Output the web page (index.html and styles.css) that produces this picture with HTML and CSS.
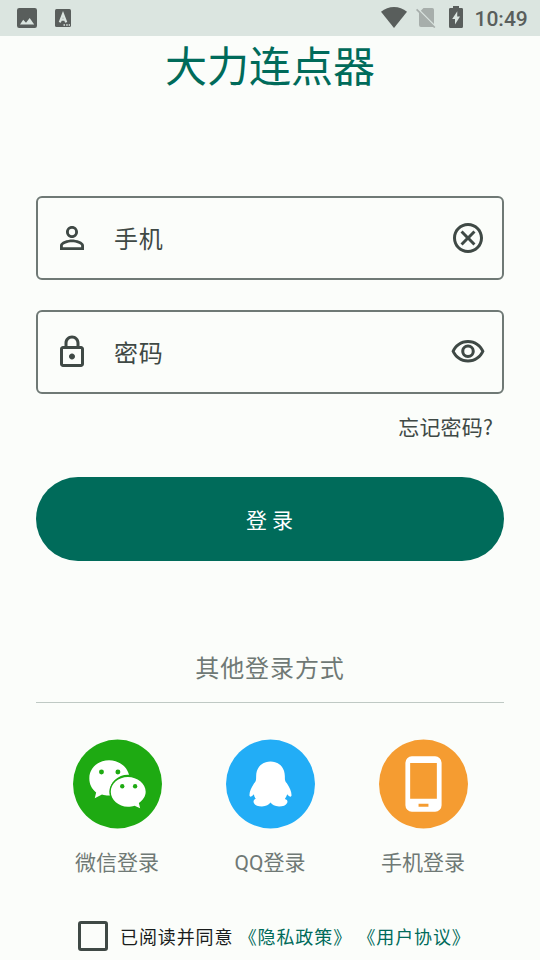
FILE: index.html
```html
<!DOCTYPE html>
<html lang="zh-CN">
<head>
<meta charset="utf-8">
<title>大力连点器</title>
<link rel="stylesheet" href="styles.css">
</head>
<body>
<header class="status">
  <svg class="s-image" viewBox="0 0 20 20"><path fill-rule="evenodd" d="M2.200 0h15.600a2.200 2.200 0 0 1 2.200 2.200v15.600a2.200 2.200 0 0 1-2.200 2.200H2.200A2.200 2.200 0 0 1 0 17.800V2.200A2.200 2.200 0 0 1 2.200 0ZM3 16.500h14.200L12.700 10 9 14.800 6.200 11.800Z"/></svg>
  <svg class="s-lang" viewBox="0 0 16 18"><rect width="16" height="18" rx="1.500"/><g class="cut"><path d="M4.800 13.300 8 5.200 11.200 13.300M6 10.600h4"/></g><path class="dots" d="M8.500 15.300h1.500v1.500H8.500zM11.200 15.300h1.500v1.500h-1.500zM13.700 15.300h1.300v1.500h-1.300z"/></svg>
  <span class="spacer"></span>
  <svg class="s-wifi" viewBox="0 0 26 21"><path d="M0 4.800Q5.800 0 13 0t13 4.800L13 21Z"/></svg>
  <svg class="s-sim" viewBox="0 0 20 20"><path d="M7.500 0h8.700Q18 0 18 1.800V16L4.800 2.700ZM3 3.500 18 18.500 17.100 19H5q-2 0-2-2Z"/><path class="slash" d="m.6 1.300 18.200 18.200"/></svg>
  <svg class="s-batt" viewBox="0 0 14 22"><path fill-rule="evenodd" d="M4 0h6v2h2.600Q14 2 14 3.300V20.500Q14 22 12.600 22H1.400Q0 22 0 20.500V3.300Q0 2 1.400 2H4ZM8.300 5.300 3.200 13H6v5.500L11 10.500H8.200Z"/></svg>
  <span class="clock">10:49</span>
</header>
<main class="page">
  <h1 class="title">大力连点器</h1>
  <div class="field">
    <svg viewBox="0 0 24 24"><path d="M12 5.900a2.100 2.100 0 1 1 0 4.200 2.100 2.100 0 0 1 0-4.200m0 9c2.970 0 6.100 1.460 6.100 2.100v1.100H5.900V17c0-.64 3.130-2.100 6.100-2.100M12 4C9.790 4 8 5.790 8 8s1.790 4 4 4 4-1.790 4-4-1.790-4-4-4zm0 9c-2.670 0-8 1.340-8 4v3h16v-3c0-2.660-5.330-4-8-4z"/></svg>
    <span class="label">手机</span>
    <svg viewBox="0 0 24 24"><path d="M12 2C6.470 2 2 6.470 2 12s4.470 10 10 10 10-4.470 10-10S17.530 2 12 2zm0 18c-4.410 0-8-3.590-8-8s3.590-8 8-8 8 3.590 8 8-3.590 8-8 8zm3.590-13L12 10.590 8.410 7 7 8.410 10.590 12 7 15.590 8.410 17 12 13.410 15.590 17 17 15.590 13.410 12 17 8.410z"/></svg>
  </div>
  <div class="field">
    <svg viewBox="0 0 24 24"><path d="M18 8h-1V6c0-2.760-2.240-5-5-5S7 3.240 7 6v2H6c-1.100 0-2 .9-2 2v10c0 1.100.9 2 2 2h12c1.100 0 2-.9 2-2V10c0-1.100-.9-2-2-2zM9 6c0-1.660 1.340-3 3-3s3 1.340 3 3v2H9V6zm9 14H6V10h12v10zm-6-3c1.100 0 2-.9 2-2s-.9-2-2-2-2 .9-2 2 .9 2 2 2z"/></svg>
    <span class="label">密码</span>
    <svg viewBox="0 0 24 24"><path d="M12 6c3.790 0 7.170 2.130 8.820 5.500C19.170 14.870 15.790 17 12 17s-7.170-2.130-8.820-5.500C4.830 8.130 8.210 6 12 6m0-2C7 4 2.730 7.110 1 11.500 2.730 15.890 7 19 12 19s9.270-3.110 11-7.500C21.270 7.110 17 4 12 4zm0 5a2.500 2.500 0 0 1 0 5 2.500 2.500 0 0 1 0-5m0-2c-2.480 0-4.500 2.020-4.500 4.500S9.520 16 12 16s4.500-2.020 4.500-4.500S14.480 7 12 7z"/></svg>
  </div>
  <a class="forgot">忘记密码?</a>
  <button class="login">登 录</button>
  <h2 class="other">其他登录方式</h2>
  <div class="methods">
    <div class="method">
      <svg viewBox="0 0 90 90"><circle class="green" cx="45" cy="45" r="45"/><path class="white" d="M36.500 21C25 21 16.500 29 16.500 39.200c0 6 2.400 10.800 6.900 14.300L22 59.500l7.300-3.800c3 .9 6.500 1.300 8.200.9C35 45 45 35 56.700 35.800 54.500 27 46 21 36.500 21Z"/><path class="green" d="M55.500 36.600c-10.300 0-18.700 7.300-18.700 16.300 0 3 .9 5.700 2.400 8l8-3 8-20Z"/><path class="white" d="M55.500 38C46 38 38.200 44.600 38.200 52.900S46 68 55.500 68c2.500 0 4.600-.4 6.700-1.100l5.700 2.600-1.300-5.200c3.900-2.800 6.900-6.700 6.900-11.400C73.500 44.600 65 38 55.500 38Z"/><g class="green"><circle cx="28.800" cy="32.800" r="2.500"/><circle cx="45.400" cy="32.800" r="2.500"/><circle cx="49.800" cy="47.300" r="2.200"/><circle cx="62.800" cy="47.300" r="2.200"/></g></svg>
      <span>微信登录</span>
    </div>
    <div class="method">
      <svg viewBox="0 0 90 90"><circle class="blue" cx="45" cy="45" r="45"/><path class="white" d="M45 22.200c-8.700 0-14.300 6.200-14.500 14.600-.1 2.100.1 3.300-.4 4.900-.4 1.600-1.300 1.800-2.100 3.300-2.500 3.800-4.600 8.500-4.200 12 .4 1.800 2.800.3 4.300-1.700.3 1.800 1 3.300 2 4.600-2.200.8-2.700 2.600-1.900 4.300 1.100 2.500 4.200 3.500 8.100 3.500 4.500 0 7-1.800 8.700-3.900 1.700 2.100 4.200 3.900 8.700 3.900 3.900 0 7-1 8.100-3.500.8-1.700.3-3.500-2.300-4.100 1.200-1.600 2-3.200 2.400-4.800 1.500 2 3.900 3.500 4.300 1.700.4-3.500-1.700-8.200-4.200-12-.8-1.500-1.700-1.700-2.100-3.300-.5-1.600-.3-2.800-.4-4.900C59.300 28.400 53.700 22.200 45 22.200Z"/></svg>
      <span>QQ登录</span>
    </div>
    <div class="method">
      <svg viewBox="0 0 90 90"><circle class="orange" cx="45" cy="45" r="45"/><path class="white" fill-rule="evenodd" d="M33.200 17h23.600a6.500 6.500 0 0 1 6.500 6.500v43a6.500 6.500 0 0 1-6.500 6.500h-23.600a6.500 6.500 0 0 1-6.500-6.500v-43a6.500 6.500 0 0 1 6.500-6.500ZM31.500 23.800v36.200h27V23.800ZM40 65v3h10V65Z"/></svg>
      <span>手机登录</span>
    </div>
  </div>
  <div class="agree"><i class="box"></i><span>已阅读并同意 <a>《隐私政策》</a> <a>《用户协议》</a></span></div>
</main>
</body>
</html>
```
FILE: styles.css
```css
* { box-sizing: border-box; }
body {
  margin: 0;
  height: 960px;
  overflow: hidden;
  background: #fbfdfa;
  color: #3f4945;
  font-family: Roboto, "Noto Sans CJK SC", sans-serif;
}
svg { display: block; flex: none; }
.status {
  height: 36px;
  display: flex;
  align-items: center;
  padding: 0 12px 0 17px;
  background: #dbe5e0;
  fill: #595e5c;
}
.s-image { width: 20px; height: 20px; }
.s-lang { width: 16px; height: 18px; margin-left: 18px; }
.cut { fill: none; stroke: #dbe5e0; stroke-width: 2.3; }
.dots { fill: #dbe5e0; }
.spacer { flex: 1; }
.s-wifi { width: 26px; height: 21px; margin-top: -1px; }
.s-sim { width: 20px; height: 20px; margin-left: 9px; fill: #a7aeab; }
.slash { fill: none; stroke: #a7aeab; stroke-width: 1.7; }
.s-batt { width: 14px; height: 22px; margin: -2px 12px 0 13px; }
.clock {
  width: 53px;
  margin-left: -.5px;
  margin-right: .5px;
  color: #595e5c;
  font-size: 21px;
  font-weight: 500;
  line-height: 36px;
  padding-top: 2px;
  white-space: nowrap;
}
.page { padding: 0 36px; display: flex; flex-direction: column; }
.title {
  margin: 0 0 98px;
  height: 62px;
  line-height: 64px;
  font-size: 42px;
  font-weight: 400;
  text-align: center;
  color: #006b5a;
}
.field {
  height: 84px;
  margin-bottom: 30px;
  padding: 0 16px;
  display: flex;
  align-items: center;
  border: 2px solid #6f7975;
  border-radius: 6px;
}
.field svg { width: 36px; height: 36px; fill: #3f4945; }
.label {
  flex: 1;
  margin-left: 24px;
  padding-top: 4px;
  font-size: 24px;
  line-height: 36px;
  letter-spacing: .75px;
}
.forgot {
  margin-top: -12px;
  align-self: flex-end;
  margin-right: 11px;
  height: 32px;
  line-height: 28px;
  font-family: "Noto Sans CJK SC", sans-serif;
  font-size: 21px;
  letter-spacing: .15px;
}
.login {
  margin-top: 33px;
  height: 84px;
  padding: 4px 1px 0 0;
  border: 0;
  border-radius: 42px;
  background: #006b5a;
  color: #fff;
  font: 400 21px/30px Roboto, "Noto Sans CJK SC", sans-serif;
}
.other {
  margin: 89px 0 0;
  height: 53px;
  border-bottom: 1px solid #bfc9c4;
  font-size: 24px;
  font-weight: 400;
  line-height: 38px;
  letter-spacing: .9px;
  text-align: center;
  color: #6f7975;
}
.methods {
  display: grid;
  grid-template-columns: repeat(3, 153px);
  justify-content: center;
  margin-top: 36px;
}
.method {
  display: flex;
  flex-direction: column;
  align-items: center;
  color: #6f7975;
  font-size: 21px;
  line-height: 30px;
}
.method svg { width: 89px; height: 90px; margin: 0 0 19px 1px; }
.white { fill: #fff; }
.green { fill: #1eaa12; }
.blue { fill: #22adf6; }
.orange { fill: #f59c31; }
.agree {
  display: flex;
  align-items: center;
  margin: 43px 0 0 42px;
  height: 30px;
  font-size: 18px;
  letter-spacing: .89px;
  color: #191c1b;
  white-space: nowrap;
}
.box {
  width: 30px;
  height: 30px;
  margin-right: 12px;
  border: 3px solid #3f4945;
  border-radius: 3px;
}
.agree a { color: #006b5a; }
```
